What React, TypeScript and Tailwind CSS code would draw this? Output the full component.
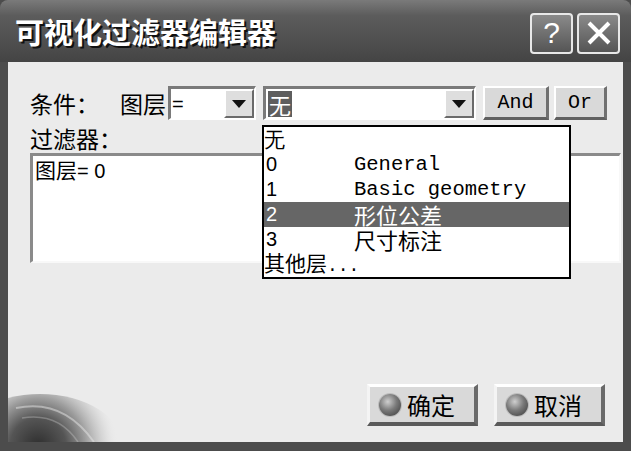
import React from "react"

const cjk = "font-['Noto_Sans_CJK_SC','Noto_Sans',sans-serif]"
const mono = "font-['Liberation_Mono','Noto_Sans_CJK_SC',monospace]"

const Arrow = () => (
  <div className="flex h-full w-[30px] items-center justify-center border-t-2 border-l-2 border-b-2 border-r-2 border-t-white border-l-white border-b-[#6a6a6a] border-r-[#6a6a6a] bg-[#dedede]">
    <svg width="14" height="8" viewBox="0 0 14 8">
      <path d="M0 0 L14 0 L7 8 Z" fill="#111" />
    </svg>
  </div>
)

const Ball = () => (
  <div className="h-[22px] w-[22px] rounded-full bg-[radial-gradient(circle_at_40%_35%,#cfcfcf_0%,#7a7a7a_45%,#353535_100%)] shadow-[0_0_0_1px_#bdbdbd]" />
)

const BigButton = ({ text }: { text: string }) => (
  <div className="flex h-[42px] w-[111px] items-center gap-[6px] border-t-[3px] border-l-[3px] border-b-[4px] border-r-[4px] border-t-white border-l-[#f4f4f4] border-b-[#5a5a5a] border-r-[#6a6a6a] bg-[#d9d9d9] pl-[9px]">
    <Ball />
    <span className={`${cjk} text-[24px] leading-none text-black`}>{text}</span>
  </div>
)

const SmallButton = ({ text, w }: { text: string; w: string }) => (
  <div className={`flex h-[34px] ${w} items-center justify-center border-t-2 border-l-2 border-b-[3px] border-r-[3px] border-t-white border-l-white border-b-[#606060] border-r-[#707070] bg-[#d9d9d9]`}>
    <span className={`${mono} text-[20px] leading-none text-black`}>{text}</span>
  </div>
)

const items = [
  { n: "无", t: "", sel: false },
  { n: "0", t: "General", sel: false, latin: true },
  { n: "1", t: "Basic geometry", sel: false, latin: true },
  { n: "2", t: "形位公差", sel: true },
  { n: "3", t: "尺寸标注", sel: false },
  { n: "其他层...", t: "", sel: false },
]

export default function App() {
  return (
    <div className="flex h-[451px] w-[631px] flex-col overflow-hidden bg-[#4c4c4c]">
      {/* title bar */}
      <div className="flex h-[62px] items-center justify-between rounded-t-[8px] bg-[linear-gradient(180deg,#7a7a7a_0%,#5c5c5c_25%,#4e4e4e_70%,#444_100%)] pl-[15px] pr-[11px]">
        <span className={`${cjk} text-[29px] font-bold leading-none text-white [text-shadow:2px_2px_0_#111]`}>
          可视化过滤器编辑器
        </span>
        <div className="flex gap-[4px] pt-[4px]">
          <div className="flex h-[41px] w-[43px] items-center justify-center rounded-[4px] border-2 border-[#e8e8e8] bg-[linear-gradient(180deg,#8a8a8a,#555)]">
            <span className="font-['Liberation_Sans',sans-serif] text-[30px] leading-none text-white">?</span>
          </div>
          <div className="flex h-[41px] w-[43px] items-center justify-center rounded-[4px] border-2 border-[#e8e8e8] bg-[linear-gradient(180deg,#8a8a8a,#555)]">
            <svg width="26" height="26" viewBox="0 0 26 26">
              <path d="M3 3 L23 23 M23 3 L3 23" stroke="#fff" strokeWidth="4" />
            </svg>
          </div>
        </div>
      </div>

      {/* body */}
      <div className="relative mx-[8px] mb-[9px] flex flex-1 flex-col bg-[#ebebeb] pl-[22px] pr-[2px] pt-[24px]">
        {/* decoration */}
        <svg className="absolute bottom-0 left-0" width="120" height="80" viewBox="0 0 120 80">
          <defs>
            <radialGradient id="g" gradientUnits="userSpaceOnUse" cx="30" cy="84" r="80">
              <stop offset="0" stopColor="#2e2e2e" />
              <stop offset="0.35" stopColor="#555" />
              <stop offset="0.6" stopColor="#9e9e9e" />
              <stop offset="0.85" stopColor="#d4d4d4" stopOpacity="0.6" />
              <stop offset="1" stopColor="#ebebeb" stopOpacity="0" />
            </radialGradient>
          </defs>
          <ellipse cx="32" cy="86" rx="84" ry="54" fill="url(#g)" />
          <path d="M8 46 Q55 36 86 80" stroke="#e6e6e6" strokeWidth="2" fill="none" opacity="0.5" />
          <path d="M14 56 Q50 50 70 80" stroke="#cfcfcf" strokeWidth="1.5" fill="none" opacity="0.35" />
        </svg>

        {/* row 1 */}
        <div className="relative flex h-[34px] items-center">
          <span className={`${cjk} w-[90px] text-[23px] leading-none text-black`}>条件：</span>
          <span className={`${cjk} w-[48px] text-[23px] leading-none text-black`}>图层</span>
          <div className="flex h-[34px] w-[88px] items-center justify-between border-t-[3px] border-l-[3px] border-b-2 border-r-2 border-t-[#7a7a7a] border-l-[#7a7a7a] border-b-white border-r-white bg-white">
            <span className="pl-[1px] font-['Liberation_Sans',sans-serif] text-[20px] leading-none">=</span>
            <Arrow />
          </div>
          <div className="ml-[7px] flex h-[34px] w-[213px] items-center justify-between border-t-[3px] border-l-[3px] border-b-2 border-r-2 border-t-[#7a7a7a] border-l-[#7a7a7a] border-b-white border-r-white bg-white">
            <span className={`${cjk} ml-[2px] bg-[#5e5e5e] px-[1px] text-[22px] leading-[26px] text-white`}>无</span>
            <Arrow />
          </div>
          <div className="ml-[7px] flex gap-[5px]">
            <SmallButton text="And" w="w-[66px]" />
            <SmallButton text="Or" w="w-[53px]" />
          </div>
        </div>

        {/* filter label */}
        <div className={`${cjk} relative mt-[5px] h-[27px] text-[23px] leading-[27px] text-black`}>过滤器：</div>

        {/* textbox */}
        <div className="relative mt-[1px] h-[110px] border-t-[3px] border-l-[3px] border-b-2 border-r-2 border-t-[#8a8a8a] border-l-[#8a8a8a] border-b-[#f8f8f8] border-r-[#f8f8f8] bg-white px-[2px]">
          <span className={`${cjk} whitespace-pre text-[21px] leading-[26px] text-black`}>
            图层<span className="font-['Liberation_Sans',sans-serif] text-[20px]">= 0</span>
          </span>
        </div>

        {/* bottom buttons */}
        <div className="relative mt-auto mb-[16px] flex justify-end gap-[16px] pr-[16px]">
          <BigButton text="确定" />
          <BigButton text="取消" />
        </div>

        {/* dropdown list */}
        <div className="absolute left-[254px] top-[63px] w-[309px] border-2 border-black bg-white">
          {items.map((it, i) => (
            <div
              key={i}
              className={`flex h-[25px] items-center ${it.sel ? "bg-[#666] text-white" : "text-black"}`}
            >
              <span className={`block leading-[25px] ${it.n.length > 1 ? cjk : "font-['Liberation_Sans',sans-serif]"} ${it.n.length > 1 || it.n === "无" ? "text-[21px]" : "w-[90px] pl-[2px] text-[20px]"}`}>
                {it.n === "其他层..." ? (
                  <>
                    其他层<span className={`${mono} text-[18px]`}>...</span>
                  </>
                ) : (
                  it.n
                )}
              </span>
              {it.t && (
                <span className={`block leading-[25px] ${it.latin ? mono + " text-[20.5px]" : cjk + " text-[22px]"}`}>{it.t}</span>
              )}
            </div>
          ))}
        </div>
      </div>
    </div>
  )
}
